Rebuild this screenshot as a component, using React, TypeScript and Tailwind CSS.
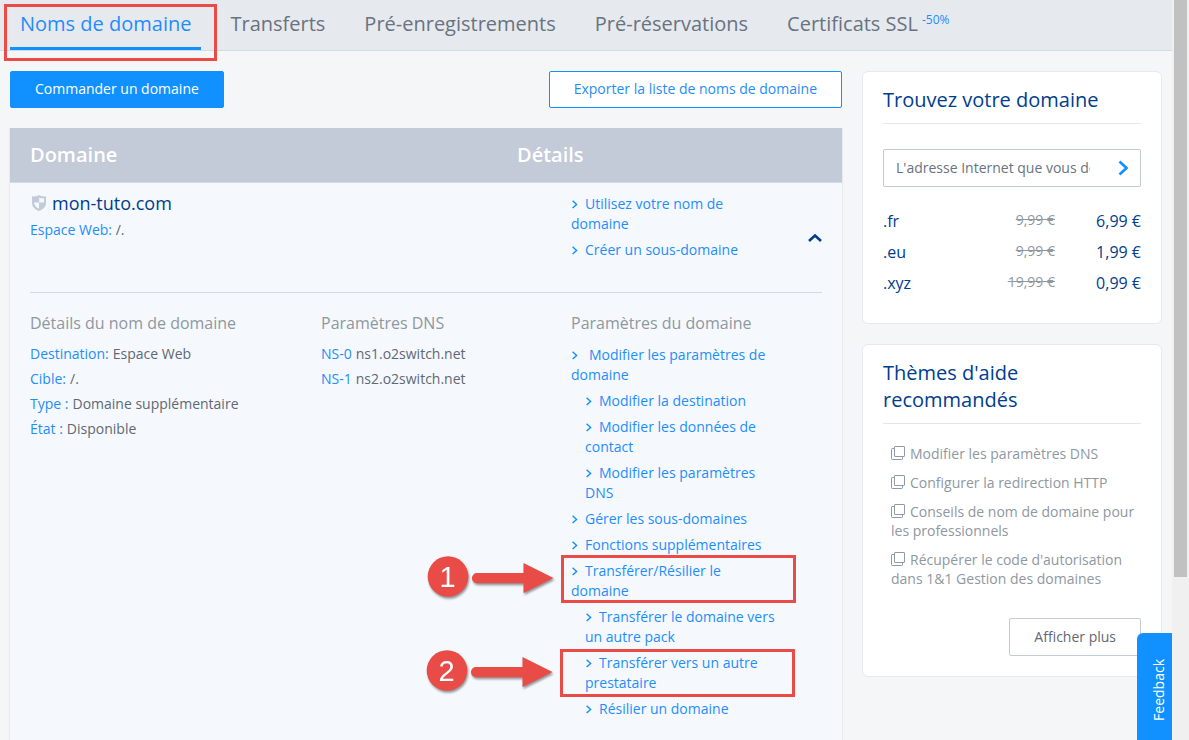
import type { ReactNode } from "react";

type DomainLink = { label: string; nested?: boolean; spaced?: boolean; step?: number };

const tabs = ["Transferts", "Pré-enregistrements", "Pré-réservations"];

const quickLinks: DomainLink[] = [
  { label: "Utilisez votre nom de domaine" },
  { label: "Créer un sous-domaine" },
];

const settingsLinks: DomainLink[] = [
  { label: "Modifier les paramètres de domaine", spaced: true },
  { label: "Modifier la destination", nested: true },
  { label: "Modifier les données de contact", nested: true },
  { label: "Modifier les paramètres DNS", nested: true },
  { label: "Gérer les sous-domaines" },
  { label: "Fonctions supplémentaires" },
  { label: "Transférer/Résilier le domaine", step: 1 },
  { label: "Transférer le domaine vers un autre pack", nested: true },
  { label: "Transférer vers un autre prestataire", nested: true, step: 2 },
  { label: "Résilier un domaine", nested: true },
];

const details = [
  ["Destination:", "Espace Web"],
  ["Cible:", "/."],
  ["Type :", "Domaine supplémentaire"],
  ["État :", "Disponible"],
];

const nameServers = [
  ["NS-0", "ns1.o2switch.net"],
  ["NS-1", "ns2.o2switch.net"],
];

const prices = [
  [".fr", "9,99 €", "6,99 €"],
  [".eu", "9,99 €", "1,99 €"],
  [".xyz", "19,99 €", "0,99 €"],
];

const helpTopics = [
  "Modifier les paramètres DNS",
  "Configurer la redirection HTTP",
  "Conseils de nom de domaine pour les professionnels",
  "Récupérer le code d'autorisation dans 1&1 Gestion des domaines",
];

function Callout({ step }: { step: number }) {
  return (
    <svg
      className="absolute -left-[140px] -top-[5px] h-[52px] w-[136px] max-w-none drop-shadow-[1px_2px_1px_rgba(0,0,0,0.4)]"
      viewBox="0 0 136 52"
      aria-hidden="true"
    >
      <circle cx="24" cy="23.5" r="20.3" fill="#e94b47" />
      <text
        x="23.5"
        y="33.5"
        textAnchor="middle"
        fill="#fff"
        fontSize="29"
        fontFamily="'Liberation Sans', Arial, sans-serif"
      >
        {step}
      </text>
      <path
        d="M53 20H99.5V10L129.5 25L99.5 40V30.2H53A5.1 5.1 0 0 1 53 20Z"
        fill="#e94b47"
      />
    </svg>
  );
}

function LinkList({ links }: { links: DomainLink[] }) {
  return (
    <ul className="space-y-1.5 pr-11">
      {links.map((link) => (
        <li key={link.label} className={link.nested ? "relative pl-3.5" : "relative"}>
          <a href="#" className="text-[#1f8dfa]">
            <svg
              className={link.spaced ? "mr-2.5 inline-block h-[9px] w-2 align-baseline" : "mr-1.5 inline-block h-[9px] w-2 align-baseline"}
              viewBox="0 0 8 9"
              fill="none"
              stroke="#1191ff"
              strokeWidth="1.4"
              aria-hidden="true"
            >
              <path d="M1.6 .8L5.6 4.4L1.6 8" />
            </svg>
            {link.label}
          </a>
          {link.step ? (
            <span
              className={
                link.step === 1
                  ? "pointer-events-none absolute -left-2.5 -top-1.5 h-12 w-[235px] border-3 border-[#ea4b46]"
                  : "pointer-events-none absolute -left-[11px] -top-1 h-12 w-[235px] border-3 border-[#ea4b46]"
              }
            >
              <Callout step={link.step} />
            </span>
          ) : null}
        </li>
      ))}
    </ul>
  );
}

function PairList({ rows }: { rows: string[][] }) {
  return (
    <dl className="mt-1.5 leading-[25px]">
      {rows.map(([name, value]) => (
        <div key={name} className="flex gap-1">
          <dt className="text-[#1f8dfa]">{name}</dt>
          <dd>{value}</dd>
        </div>
      ))}
    </dl>
  );
}

function Card({ title, children }: { title: string; children: ReactNode }) {
  return (
    <section className="rounded-md border border-[#e6e9ee] bg-white px-5 pt-3.5">
      <h2 className="border-b border-[#e3e6ea] pb-2.5 text-xl leading-[27px] text-[#003d8f]">{title}</h2>
      {children}
    </section>
  );
}

function ColumnTitle({ children }: { children: ReactNode }) {
  return <h3 className="text-base leading-6 text-[#8f979f]">{children}</h3>;
}

export default function App() {
  return (
    <div className="flex min-h-screen bg-[#f5f6f8] font-['Open_Sans','Noto_Sans',sans-serif] text-sm leading-5 text-[#5f6873]">
      <div className="flex min-w-0 flex-1 flex-col">
        <nav className="flex gap-[19px] border-b border-[#d3dce2] bg-[#e6e9ee] px-2.5 text-xl text-[#697380]">
          <div className="relative">
            <a href="#" aria-current="page" className="block h-[50px] border-b-3 border-[#1191ff] px-2.5 leading-[48px] text-[#1f8dfa]">
              Noms de domaine
            </a>
            <span className="pointer-events-none absolute -left-1.5 -right-4 -bottom-[11px] top-1 border-3 border-[#ea4b46]" />
          </div>
          {tabs.map((tab) => (
            <a key={tab} href="#" className="px-2.5 leading-[48px]">
              {tab}
            </a>
          ))}
          <a href="#" className="flex gap-1 px-2.5 leading-[48px]">
            Certificats SSL
            <span className="text-xs leading-10 text-[#1f8dfa]">-50%</span>
          </a>
        </nav>

        <div className="flex flex-1 gap-5 px-2.5 pt-5">
          <main className="flex min-w-0 flex-1 flex-col">
            <div className="flex justify-between">
              <button className="h-[37px] rounded-xs border border-[#1191ff] bg-[#1191ff] px-6 pb-0.5 text-white">
                Commander un domaine
              </button>
              <button className="h-[37px] rounded-xs border border-[#1191ff] bg-white px-6 pb-0.5 text-[#1f8dfa]">
                Exporter la liste de noms de domaine
              </button>
            </div>

            <section className="-mx-px mt-5 flex-1 border-x border-[#e6e9ee] bg-[#f5f9fd]">
              <div className="grid grid-cols-[487fr_305fr] border-b border-[#d3dae3] bg-[#c3cad8] px-5 text-xl leading-[54px] font-semibold text-white">
                <h2>Domaine</h2>
                <h2>Détails</h2>
              </div>

              <div className="px-5">
                <div className="grid min-h-[110px] grid-cols-[541fr_251fr] border-b border-[#d3dae3] pt-[11px]">
                  <div>
                    <h3 className="flex items-center gap-1.5 text-lg leading-[18px] text-[#003d8f]">
                      <svg className="ml-0.5 h-4 w-[14px]" viewBox="0 0 14 16" aria-hidden="true">
                        <path d="M7 0C5 1.4 2.6 1.6 0 1.2V8C0 12 3.4 14.8 7 16C10.6 14.8 14 12 14 8V1.2C11.4 1.6 9 1.4 7 0Z" fill="#c3cad8" />
                        <path d="M7.2 2.4C8.6 3.1 10.2 3.4 12 3.3V7.6H7.2ZM7 7.6V13.8C4.4 12.6 2.3 10.6 2 7.6Z" fill="#f5f9fd" />
                      </svg>
                      mon-tuto.com
                    </h3>
                    <p className="mt-2">
                      <span className="text-[#1f8dfa]">Espace Web:</span> /.
                    </p>
                  </div>
                  <div className="flex justify-between">
                    <div className="flex-1">
                      <LinkList links={quickLinks} />
                    </div>
                    <button aria-label="Réduire les détails" className="-ml-4 mt-9 h-4 w-4 self-start">
                      <svg viewBox="0 0 16 16" fill="none" stroke="#003d8f" strokeWidth="2.6" aria-hidden="true">
                        <path d="M3 11L9 5.6L15 11" />
                      </svg>
                    </button>
                  </div>
                </div>

                <div className="grid grid-cols-[291fr_250fr_251fr] pt-[18px] pb-5">
                  <div>
                    <ColumnTitle>Détails du nom de domaine</ColumnTitle>
                    <PairList rows={details} />
                  </div>
                  <div>
                    <ColumnTitle>Paramètres DNS</ColumnTitle>
                    <PairList rows={nameServers} />
                  </div>
                  <div>
                    <ColumnTitle>Paramètres du domaine</ColumnTitle>
                    <div className="mt-2.5">
                      <LinkList links={settingsLinks} />
                    </div>
                  </div>
                </div>
              </div>
            </section>
          </main>

          <aside className="flex w-[300px] shrink-0 flex-col gap-5">
            <Card title="Trouvez votre domaine">
              <form className="mt-[25px] flex h-[38px] rounded-xs border border-[#c3c8cf] bg-white">
                <input
                  type="text"
                  aria-label="Adresse Internet"
                  placeholder="L'adresse Internet que vous désirez"
                  className="ml-3 min-w-0 flex-1 outline-none placeholder:text-[#697380]"
                />
                <button type="button" aria-label="Rechercher" className="ml-4 w-[34px] pl-2.5">
                  <svg className="h-4 w-4" viewBox="0 0 16 16" fill="none" stroke="#1191ff" strokeWidth="2.6" aria-hidden="true">
                    <path d="M3.5 1.5L10.5 8L3.5 14.5" />
                  </svg>
                </button>
              </form>
              <table className="mt-[18px] mb-[25px] w-full text-base text-[#003d8f]">
                <tbody>
                  {prices.map(([tld, before, now]) => (
                    <tr key={tld} className="h-[31px]">
                      <td>{tld}</td>
                      <td className="pb-0.5 text-right text-sm text-[#8f979f] line-through">{before}</td>
                      <td className="w-[86px] text-right">{now}</td>
                    </tr>
                  ))}
                </tbody>
              </table>
            </Card>

            <Card title="Thèmes d'aide recommandés">
              <ul className="mt-5 space-y-2.5 pl-2 leading-[19px] text-[#8f979f]">
                {helpTopics.map((topic) => (
                  <li key={topic}>
                    <a href="#">
                      <svg
                        className="mr-[5px] inline-block h-[14px] w-[14px] align-[-1px]"
                        viewBox="0 0 14 14"
                        fill="none"
                        stroke="#8f9bab"
                        aria-hidden="true"
                      >
                        <rect x="3.5" y=".5" width="10" height="10" rx=".5" />
                        <path d="M3.5 2.5H1.2Q.5 2.5 .5 3.2V12.8Q.5 13.5 1.2 13.5H10.8Q11.5 13.5 11.5 12.8V10.5" />
                      </svg>
                      {topic}
                    </a>
                  </li>
                ))}
              </ul>
              <div className="mt-[30px] mb-5 flex justify-end">
                <button className="h-[38px] rounded-xs border border-[#c3cad8] bg-white px-6">Afficher plus</button>
              </div>
            </Card>
          </aside>
        </div>
      </div>

      <div className="w-[17px] shrink-0 bg-[#f0f0f0]" aria-hidden="true">
        <div className="sticky top-0 mx-0.5 h-[78vh] bg-[#c1c1c1]" />
      </div>

      <button className="fixed right-[17px] bottom-0 flex h-[107px] w-[35px] items-center justify-center rounded-tl-md bg-[#1191ff] pt-1.5 pl-2 text-white">
        <span className="block rotate-180 [writing-mode:vertical-rl]">Feedback</span>
      </button>
    </div>
  );
}
